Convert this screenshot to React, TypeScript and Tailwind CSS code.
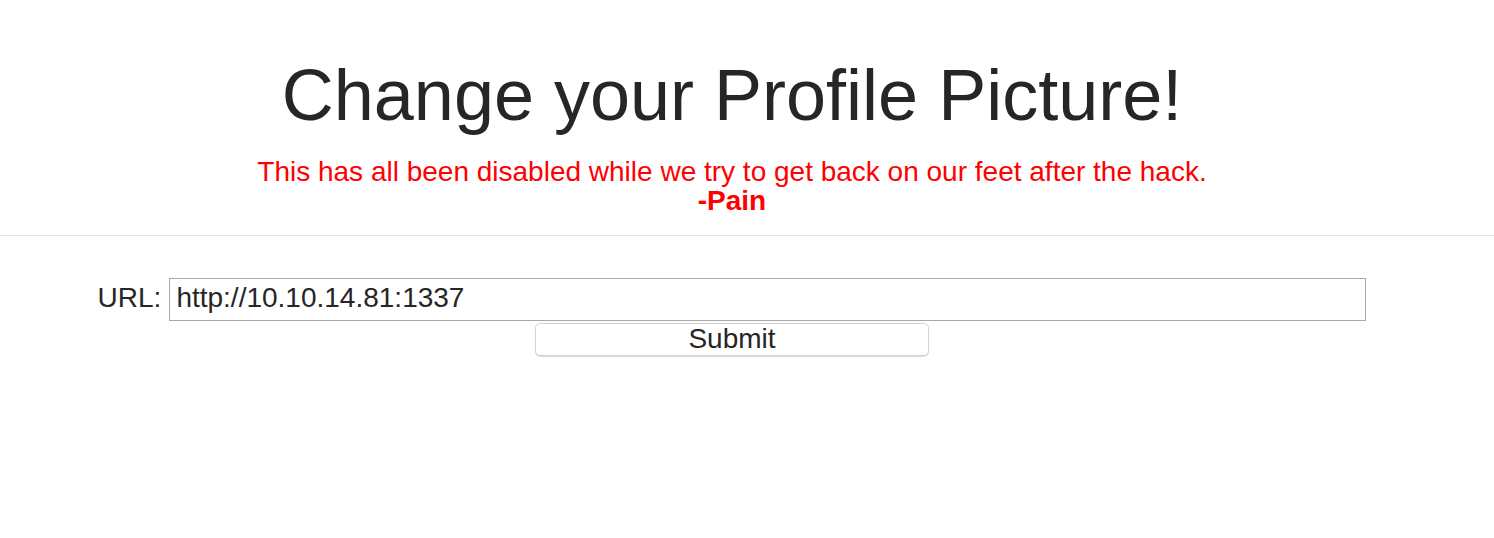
export default function App() {
  return (
    <div
      className="min-h-[538px] bg-white text-[#262626]"
      style={{ fontFamily: '"Liberation Sans", Arial, Helvetica, sans-serif' }}
    >
      <header className="w-[1464px] pt-[54px] text-center">
        <h1 className="text-[72px] font-normal leading-[82px]">Change your Profile Picture!</h1>
        <p className="mt-[21px] text-[28px] leading-[29px] text-[#ff0000]">
          This has all been disabled while we try to get back on our feet after the hack.
          <br />
          <b>-Pain</b>
        </p>
      </header>

      <hr className="mt-[20px] border-0 border-t border-[#e5e5e5]" />

      <form
        className="flex w-[1464px] flex-col items-center pt-[42px]"
        onSubmit={(e) => e.preventDefault()}
      >
        <div className="flex items-center gap-[8px]">
          <label htmlFor="url" className="mb-[3px] text-[28px] leading-[32px]">
            URL:
          </label>
          <input
            id="url"
            type="text"
            defaultValue="http://10.10.14.81:1337"
            className="h-[43px] w-[1197px] border border-[#a9a9a9] px-[6px] pb-[3px] text-[28px] text-[#262626] outline-none"
          />
        </div>
        <button
          type="submit"
          className="mt-[2px] h-[33px] w-[394px] rounded-[5px] border border-[#d4d4d4] bg-white pb-[2px] text-[28px] leading-[30px] text-[#262626] shadow-[0_1px_1px_rgba(0,0,0,0.15)]"
        >
          Submit
        </button>
      </form>
    </div>
  );
}
